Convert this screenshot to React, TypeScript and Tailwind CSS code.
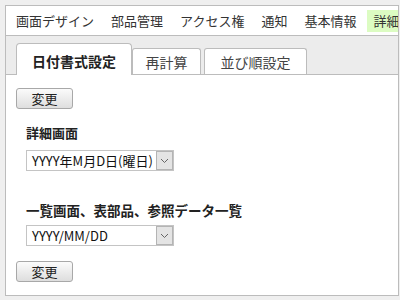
const NAV = ["画面デザイン", "部品管理", "アクセス権", "通知", "基本情報", "詳細"];

const FONT = "font-['Noto_Sans_CJK_JP',sans-serif]";

function Chevron() {
  return (
    <svg width="9" height="6" viewBox="0 0 9 6" fill="none">
      <path d="M1 1l3.5 3.5L8 1" stroke="#666" strokeWidth="1" />
    </svg>
  );
}

function Select({ value }: { value: string }) {
  return (
    <div className="flex h-[21px] w-[148px] items-stretch border border-[#c4c4c4] bg-white">
      <div className="flex flex-1 items-center pl-[5px] text-[13px] leading-none text-[#111]">{value}</div>
      <div className="flex w-[17px] items-center justify-center border border-[#b4b4b4] bg-[#e4e4e4]">
        <Chevron />
      </div>
    </div>
  );
}

function Button() {
  return (
    <button className="flex h-[21px] w-[57px] items-center justify-center rounded-[3px] border border-[#a8a8a8] bg-gradient-to-b from-[#fbfbfb] to-[#dedede] text-[13px] leading-none text-[#222]">
      変更
    </button>
  );
}

export default function App() {
  return (
    <div className={`h-[300px] w-[400px] overflow-hidden bg-[#efefef] pb-[4px] pl-[5px] pr-[1px] pt-[5px] ${FONT}`}>
      <div className="flex h-full flex-col overflow-hidden border border-[#bcbcbc] bg-white">
        {/* top menu */}
        <div className="flex h-[30px] shrink-0 items-center gap-[5px] whitespace-nowrap border-b border-[#bcbcbc] pl-[4px]">
          {NAV.map((n) => (
            <div
              key={n}
              className={`flex h-[22px] shrink-0 items-center px-[6px] text-[13px] leading-none text-[#333] ${n === "詳細" ? "bg-[#dcfcc2]" : ""}`}
            >
              {n}
            </div>
          ))}
        </div>

        {/* tabs */}
        <div className="flex h-[39px] shrink-0 items-end border-b border-[#bcbcbc] bg-[#ececec] pl-[10px]">
          <div className="-mb-px flex h-[32px] w-[116px] items-center justify-center rounded-t-[4px] border border-b-0 border-[#bcbcbc] bg-white pt-[2px] text-[14px] font-bold leading-none text-[#222]">
            日付書式設定
          </div>
          <div className="flex h-[26px] w-[69px] items-center justify-center rounded-t-[3px] border border-b-0 border-[#bcbcbc] bg-white pt-[1px] text-[14px] leading-none text-[#444]">
            再計算
          </div>
          <div className="ml-[3px] flex h-[26px] w-[103px] items-center justify-center rounded-t-[3px] border border-b-0 border-[#bcbcbc] bg-white pt-[1px] text-[14px] leading-none text-[#444]">
            並び順設定
          </div>
        </div>

        {/* content */}
        <div className="flex flex-col items-start pl-[10px]">
          <div className="mt-[13px]">
            <Button />
          </div>
          <div className="ml-[10px] mt-[15px] text-[13px] font-bold leading-[18px] text-[#222]">詳細画面</div>
          <div className="ml-[10px] mt-[8px]">
            <Select value="YYYY年M月D日(曜日)" />
          </div>
          <div className="ml-[10px] mt-[30px] text-[13.5px] font-bold leading-[18px] text-[#222]">
            一覧画面、表部品、参照データ一覧
          </div>
          <div className="ml-[10px] mt-[6px]">
            <Select value="YYYY/MM/DD" />
          </div>
          <div className="mt-[15px]">
            <Button />
          </div>
        </div>
      </div>
    </div>
  );
}
